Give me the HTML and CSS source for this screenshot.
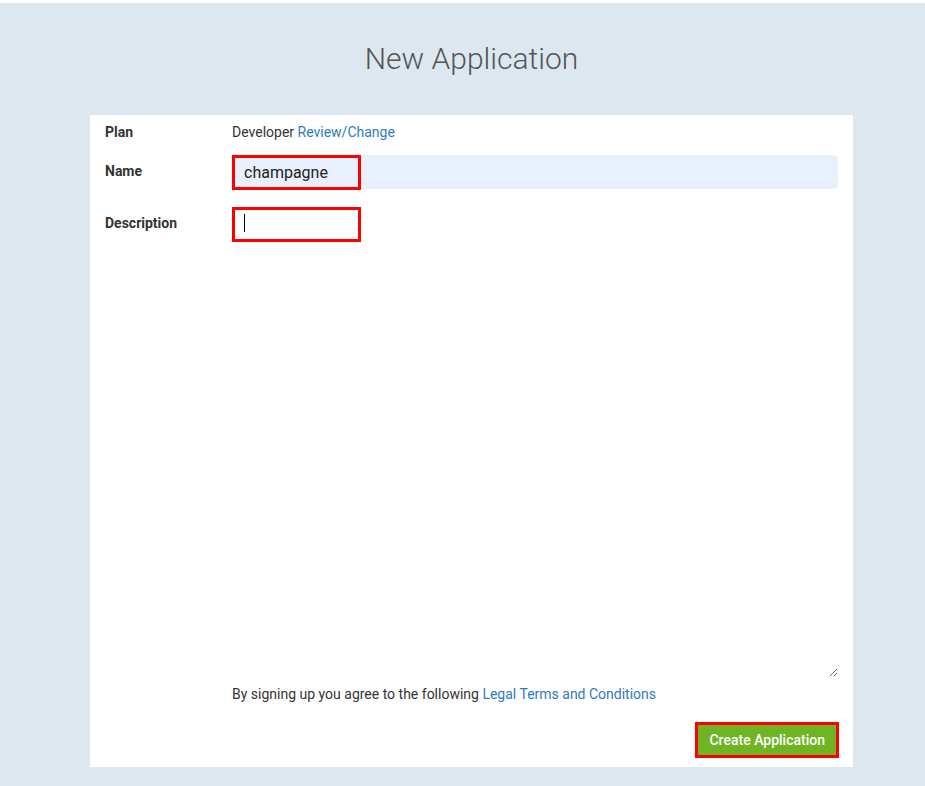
FILE: index.html
```html
<!DOCTYPE html>
<html>
<head>
<meta charset="utf-8">
<link rel="stylesheet" href="styles.css">
</head>
<body>
<div class="page">
  <h1 class="title">New Application</h1>
  <form class="card">
    <div class="label plan-label">Plan</div>
    <div class="value plan-value">Developer <a href="#" class="link">Review/Change</a></div>

    <div class="label">Name</div>
    <div class="field">
      <input class="input" type="text" value="champagne">
      <span class="mark mark-name"></span>
    </div>

    <div class="label">Description</div>
    <div class="field">
      <textarea class="textarea"></textarea>
      <span class="mark mark-desc"></span>
      <span class="caret"></span>
    </div>

    <div></div>
    <div class="terms">By signing up you agree to the following <a href="#" class="link">Legal Terms and Conditions</a></div>

    <div class="actions">
      <span class="btn-wrap"><button type="button" class="btn">Create Application</button></span>
    </div>
  </form>
</div>
</body>
</html>
```

FILE: styles.css
```css
html, body {
  margin: 0;
  padding: 0;
  background: #ffffff;
  height: 100%;
}
body {
  font-family: Roboto, "Liberation Sans", sans-serif;
  color: #333;
}
.page {
  margin-top: 3px;
  background: #dde7f0;
  min-height: 783px;
  box-sizing: border-box;
  padding-top: 38px;
  padding-bottom: 19px;
}
.title {
  margin: 0 0 0 18px;
  text-align: center;
  font-weight: 300;
  font-size: 30px;
  line-height: 36px;
  color: #555;
  height: 74px;
}
.card {
  margin-left: 90px;
  width: 763px;
  box-sizing: border-box;
  background: #fff;
  padding: 7px 15px 9px 15px;
  display: grid;
  grid-template-columns: 127px 1fr;
  column-gap: 0;
  font-size: 14px;
  line-height: 20px;
}
.label {
  font-weight: 700;
  color: #333;
  padding-top: 6px;
}
.plan-label { padding-top: 0; }
.plan-value { color: #333; margin-bottom: 13px; }
.link { color: #2f7bbf; text-decoration: none; }
.field { position: relative; }
.input {
  display: block;
  width: 100%;
  box-sizing: border-box;
  height: 34px;
  border: none;
  border-radius: 5px;
  background: #e8f0fe;
  font-family: Roboto, "Liberation Sans", sans-serif;
  font-size: 16px;
  color: #222;
  padding: 0 12px;
  margin: 0 0 18px 0;
  outline: none;
}
.textarea {
  display: block;
  width: 100%;
  box-sizing: border-box;
  height: 470px;
  border: none;
  background: #fff;
  font-family: Roboto, "Liberation Sans", sans-serif;
  font-size: 16px;
  padding: 6px 12px;
  margin: 0 0 7px 0;
  outline: none;
  resize: vertical;
}
.mark {
  position: absolute;
  left: 0;
  width: 129px;
  height: 35px;
  box-sizing: border-box;
  border: 3px solid #ff0000;
  pointer-events: none;
}
.mark-name { top: 0; }
.mark-desc { top: 0; }
.caret {
  position: absolute;
  left: 12px;
  top: 7px;
  width: 1px;
  height: 18px;
  background: #000;
}
.terms {
  color: #333;
  font-size: 14px;
  line-height: 20px;
}
.actions {
  grid-column: 1 / 3;
  display: flex;
  justify-content: flex-end;
  margin-top: 18px;
}
.btn-wrap {
  display: inline-block;
  border: 3px solid #ff0000;
  margin-right: -1px;
}
.btn {
  display: block;
  background: #6eb423;
  color: #fff;
  border: none;
  font-family: Roboto, "Liberation Sans", sans-serif;
  font-size: 14px;
  font-weight: 500;
  height: 30px;
  padding: 0 11px;
  cursor: pointer;
}
```
